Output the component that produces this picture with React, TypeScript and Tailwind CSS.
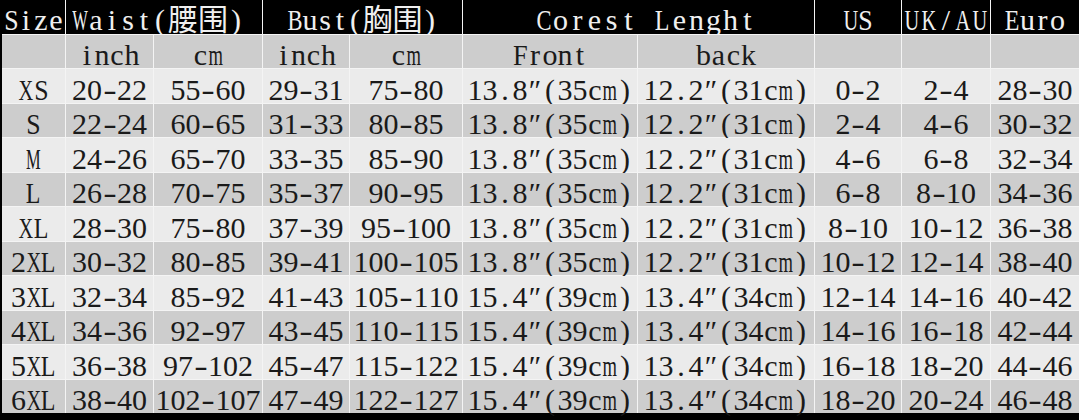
import React from "react";

const rows: string[][] = [
  ["XS", "20-22", "55-60", "29-31", "75-80", "13.8″(35cm)", "12.2″(31cm)", "0-2", "2-4", "28-30"],
  ["S", "22-24", "60-65", "31-33", "80-85", "13.8″(35cm)", "12.2″(31cm)", "2-4", "4-6", "30-32"],
  ["M", "24-26", "65-70", "33-35", "85-90", "13.8″(35cm)", "12.2″(31cm)", "4-6", "6-8", "32-34"],
  ["L", "26-28", "70-75", "35-37", "90-95", "13.8″(35cm)", "12.2″(31cm)", "6-8", "8-10", "34-36"],
  ["XL", "28-30", "75-80", "37-39", "95-100", "13.8″(35cm)", "12.2″(31cm)", "8-10", "10-12", "36-38"],
  ["2XL", "30-32", "80-85", "39-41", "100-105", "13.8″(35cm)", "12.2″(31cm)", "10-12", "12-14", "38-40"],
  ["3XL", "32-34", "85-92", "41-43", "105-110", "15.4″(39cm)", "13.4″(34cm)", "12-14", "14-16", "40-42"],
  ["4XL", "34-36", "92-97", "43-45", "110-115", "15.4″(39cm)", "13.4″(34cm)", "14-16", "16-18", "42-44"],
  ["5XL", "36-38", "97-102", "45-47", "115-122", "15.4″(39cm)", "13.4″(34cm)", "16-18", "18-20", "44-46"],
  ["6XL", "38-40", "102-107", "47-49", "122-127", "15.4″(39cm)", "13.4″(34cm)", "18-20", "20-24", "46-48"],
];

// Squeeze wide serif glyphs into half-width cells, as the original SimSun-like face does.
const SC: Record<string, string> = {
  m: "scale-x-[0.62]",
  M: "scale-x-[0.55]",
  W: "scale-x-[0.55]",
  X: "scale-x-[0.68]",
  L: "scale-x-[0.8]",
  S: "scale-x-[0.86]",
  B: "scale-x-[0.75]",
  C: "scale-x-[0.75]",
  U: "scale-x-[0.68]",
  K: "scale-x-[0.68]",
  A: "scale-x-[0.68]",
  E: "scale-x-[0.8]",
  F: "scale-x-[0.88]",
  "-": "scale-x-[1.35]",
};

function Txt({ t, w = "w-[15px]" }: { t: string; w?: string }) {
  return (
    <span className="inline-flex items-end">
      {Array.from(t).map((ch, i) => (
        <span key={i} className={`inline-flex justify-center ${w}`}>
          <span className={`inline-block whitespace-pre ${SC[ch] ?? ""}`}>{ch}</span>
        </span>
      ))}
    </span>
  );
}

function Cjk({ t }: { t: string }) {
  return (
    <span className="inline-block whitespace-nowrap text-[30px] font-['Noto_Sans_CJK_SC',sans-serif] leading-[30px]">
      {t}
    </span>
  );
}

function HeadCell({ span, extra = "justify-center", children }: { span: string; extra?: string; children?: React.ReactNode }) {
  return (
    <div className={`${span} ${extra} bg-black text-[#efefef] flex items-end pb-[2px] overflow-visible`}>
      {children}
    </div>
  );
}

function Cell({ bg, children }: { bg: string; children?: string }) {
  return (
    <div className={`${bg} text-[#1a1a1a] flex items-end justify-center pb-[1px] overflow-visible`}>
      {children ? <Txt t={children} /> : null}
    </div>
  );
}

export default function App() {
  return (
    <div className="w-[1079px] h-[420px] bg-black pl-[2px] pb-[7px] font-['Liberation_Serif',serif] text-[30px] leading-[24px]">
      <div className="grid h-[413px] gap-px bg-[#f4f4f4] grid-cols-[63px_87px_108px_86px_112px_174px_176px_86px_88px_88px] grid-rows-[34px_repeat(11,minmax(0,1fr))]">
        <HeadCell span="col-span-1">
          <Txt t="Size" />
        </HeadCell>
        <HeadCell span="col-span-2" extra="justify-start pl-[6px]">
          <Txt t="Waist(" w="w-[16px]" />
          <Cjk t="腰围" />
          <Txt t=")" w="w-[16px]" />
        </HeadCell>
        <HeadCell span="col-span-2">
          <Txt t="Bust(" />
          <Cjk t="胸围" />
          <Txt t=")" />
        </HeadCell>
        <HeadCell span="col-span-2" extra="justify-center pl-[14px]">
          <Txt t="Corest Lenght" w="w-[17px]" />
        </HeadCell>
        <HeadCell span="col-span-1">
          <Txt t="US" />
        </HeadCell>
        <HeadCell span="col-span-1">
          <Txt t="UK/AU" w="w-[17px]" />
        </HeadCell>
        <HeadCell span="col-span-1">
          <Txt t="Euro" />
        </HeadCell>

        <Cell bg="bg-[#cdcdcd]" />
        <Cell bg="bg-[#cdcdcd]">inch</Cell>
        <Cell bg="bg-[#cdcdcd]">cm</Cell>
        <Cell bg="bg-[#cdcdcd]">inch</Cell>
        <Cell bg="bg-[#cdcdcd]">cm</Cell>
        <Cell bg="bg-[#cdcdcd]">Front</Cell>
        <Cell bg="bg-[#cdcdcd]">back</Cell>
        <Cell bg="bg-[#cdcdcd]" />
        <Cell bg="bg-[#cdcdcd]" />
        <Cell bg="bg-[#cdcdcd]" />

        {rows.map((r, i) =>
          r.map((v, j) => (
            <Cell key={`${i}-${j}`} bg={i % 2 === 0 ? "bg-[#ebebeb]" : "bg-[#cdcdcd]"}>
              {v}
            </Cell>
          ))
        )}
      </div>
    </div>
  );
}
